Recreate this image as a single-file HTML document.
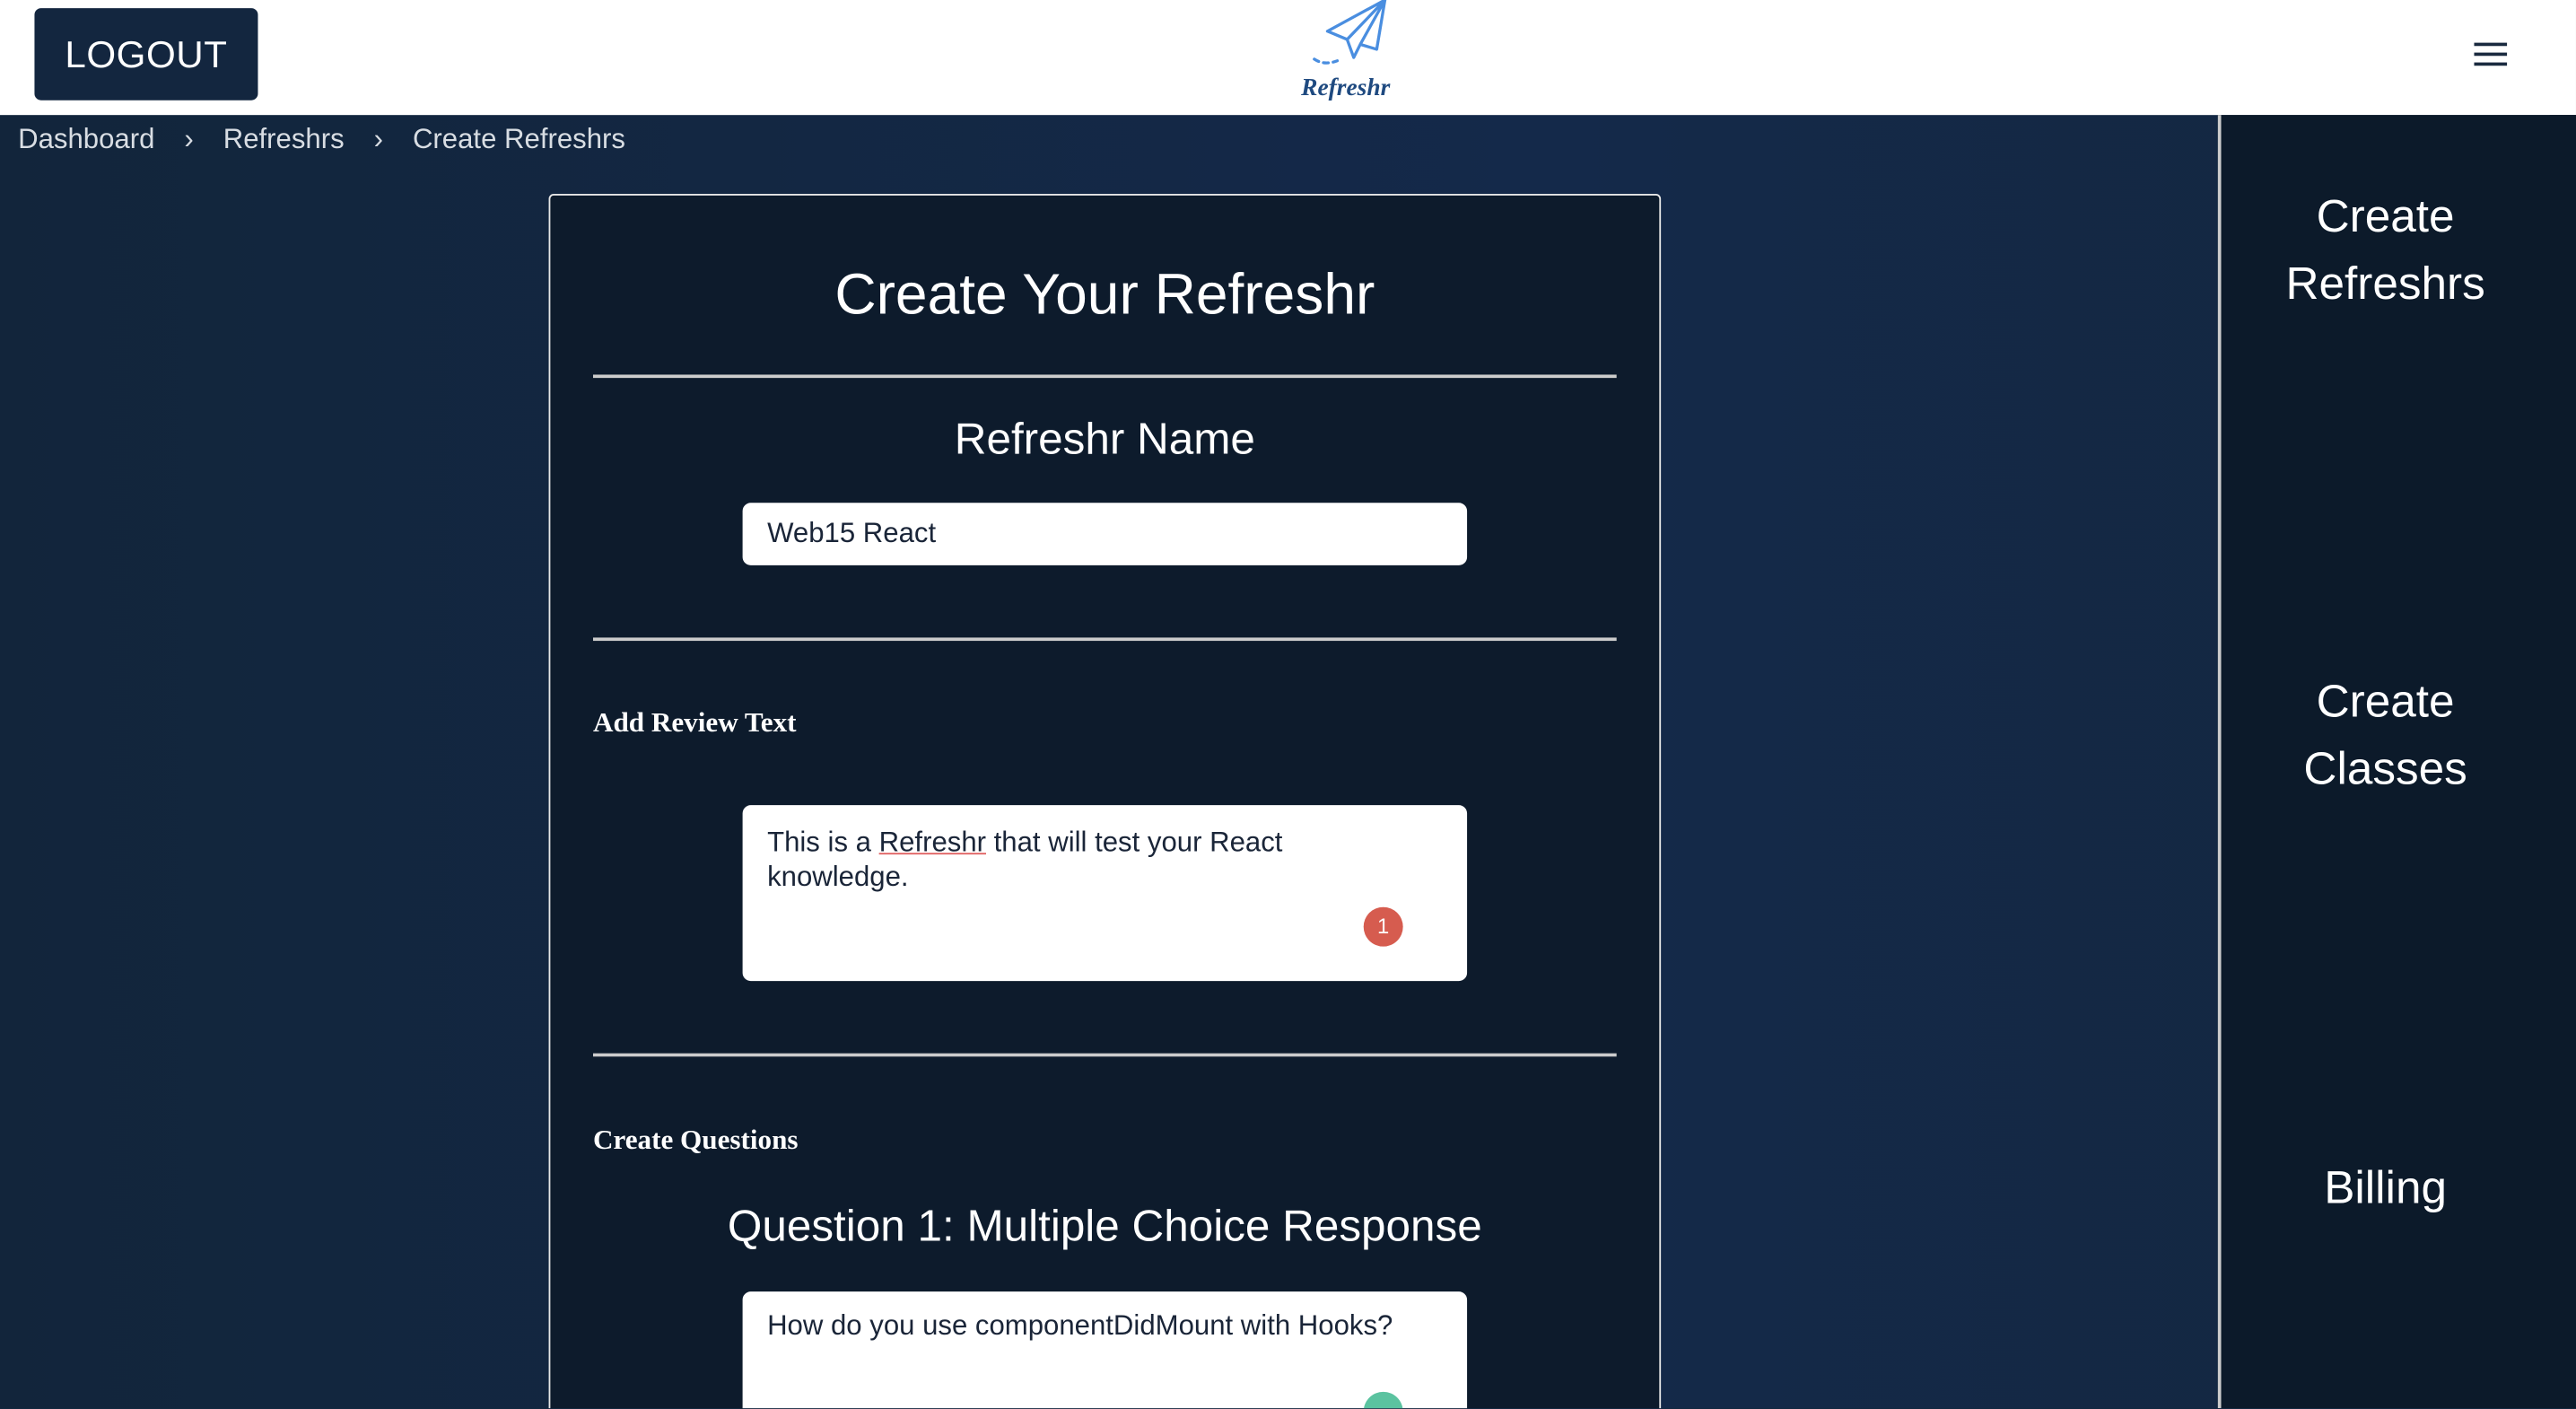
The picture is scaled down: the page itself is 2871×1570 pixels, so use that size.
<!DOCTYPE html>
<html><head><meta charset="utf-8"><style>
html,body{margin:0;padding:0;width:2871px;height:1570px;overflow:hidden;background:#13283f}
#w{position:absolute;left:0;top:0;width:1568px;height:857px;transform:scale(1.83099);transform-origin:0 0;font-family:"Liberation Sans",sans-serif;overflow:hidden;background:linear-gradient(90deg,#12253b 0%,#14294a 60%,#13283f 100%)}
.hdr{position:absolute;left:0;top:0;width:1568px;height:70px;background:#fff}
.logout{position:absolute;left:21px;top:5px;width:136px;height:56px;background:#13263f;border-radius:4px;color:#fff;font-size:23px;text-align:center;line-height:56px;letter-spacing:0.3px}
.ham{position:absolute;left:1506px;top:26px;width:20px}
.ham div{height:2px;background:#1a2a3f;margin-bottom:4px}
.crumb{position:absolute;left:11px;top:75px;color:#d8dde3;font-size:17px}
.crumb span{margin:0 18px}
.card{position:absolute;left:334px;top:118px;width:675px;height:780px;background:#0d1b2c;border:1px solid #e6e6e6;border-radius:3px;color:#fff}
.t{position:absolute;width:100%;text-align:center}
.hr{position:absolute;left:26px;width:623px;height:2px;background:#ccc}
.inp{position:absolute;left:117px;width:441px;background:#fff;border-radius:5px;color:#1a2538;font-size:17px;box-sizing:border-box;padding:9px 15px}
.lbl{position:absolute;left:26px;font-family:"Liberation Serif",serif;font-weight:bold;font-size:17px}
.side{position:absolute;left:1350px;top:70px;width:200px;height:787px;background:#0c1a2a;border-left:2px solid #ccc;border-right:16px solid #0c1a2a;color:#fff;font-size:28px;text-align:center;line-height:41px}
.side div{position:absolute;width:100%}
</style></head><body><div id="w">
<div class="hdr">
<div class="logout">LOGOUT</div>
<svg style="position:absolute;left:790px;top:0" width="70" height="64" viewBox="0 0 70 64">
<g fill="none" stroke="#4a8ee0" stroke-width="1.8" stroke-linejoin="round" stroke-linecap="round">
<path d="M53 0 L18 19 L30 24 L34 35 L38 27 L48 30 Z M53 0 L30 24 M53 0 L38 27"/>
<path d="M10 36 Q16 40 24 37" stroke-dasharray="3 3"/>
</g>
<text x="2" y="58" font-family="Liberation Serif,serif" font-style="italic" font-weight="bold" font-size="15" fill="#1f4a80">Refreshr</text>
</svg>
<div class="ham"><div></div><div></div><div></div></div>
</div>
<div class="crumb">Dashboard<span>›</span>Refreshrs<span>›</span>Create Refreshrs</div>
<div class="card">
<div class="t" style="top:41px;font-size:35px">Create Your Refreshr</div>
<div class="hr" style="top:109px"></div>
<div class="t" style="top:133px;font-size:27px">Refreshr Name</div>
<div class="inp" style="top:187px;height:38px">Web15 React</div>
<div class="hr" style="top:269px"></div>
<div class="lbl" style="top:311px">Add Review Text</div>
<div class="inp" style="top:371px;height:107px;line-height:21px;padding-right:95px;padding-top:12px">This is a <span style="text-decoration:underline;text-decoration-color:#e06060">Refreshr</span> that will test your React knowledge.
<div style="position:absolute;left:378px;top:62px;width:24px;height:24px;border-radius:50%;background:#d65c4f;color:#fff;font-size:13px;text-align:center;line-height:24px">1</div></div>
<div class="hr" style="top:522px"></div>
<div class="lbl" style="top:565px">Create Questions</div>
<div class="t" style="top:612px;font-size:27px">Question 1: Multiple Choice Response</div>
<div class="inp" style="top:667px;height:120px;padding-top:11px">How do you use componentDidMount with Hooks?
<div style="position:absolute;left:378px;top:61px;width:24px;height:24px;border-radius:50%;background:#5bc3a0"></div></div>
</div>
<div class="side">
<div style="top:41px">Create<br>Refreshrs</div>
<div style="top:336px">Create<br>Classes</div>
<div style="top:632px">Billing</div>
</div>
</div></body></html>
